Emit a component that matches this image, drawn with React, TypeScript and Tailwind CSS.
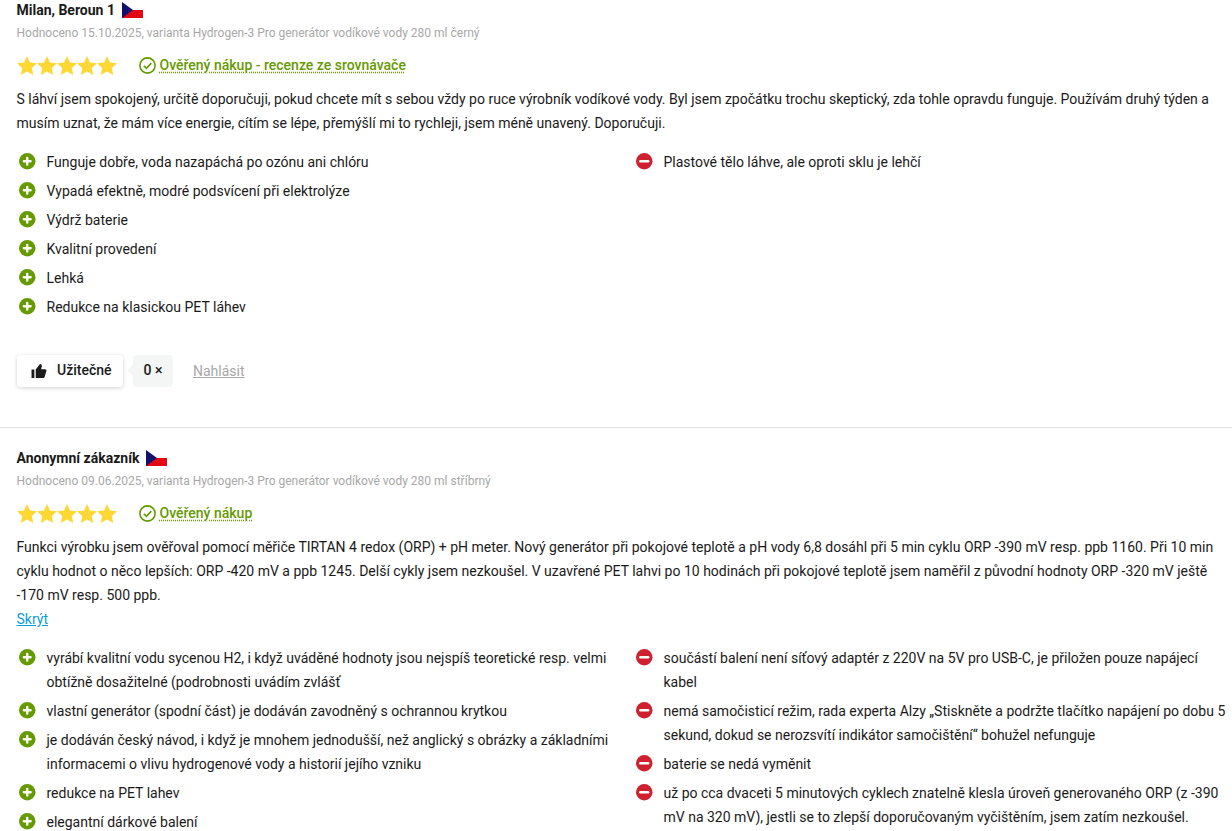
const Flag = () => (
  <svg width="21" height="16" viewBox="0 0 21 16" className="shrink-0">
    <rect width="21" height="8" fill="#fff" />
    <rect y="8" width="21" height="8" fill="#e30613" />
    <path d="M0 0L11 8L0 16Z" fill="#11116b" />
  </svg>
);

const Star = () => (
  <svg width="20" height="19" viewBox="0 0 20 19" className="shrink-0">
    <path d="M10 0l2.9 6.4 7.1.8-5.2 4.7 1.4 7L10 15.4 3.800 18.900l1.400-7L0 7.200l7.100-.8z" fill="#fdd835" />
  </svg>
);

const Plus = () => (
  <svg width="16.500" height="16.500" viewBox="0 0 17 17" className="shrink-0 mt-[3px] ml-[2.500px]">
    <circle cx="8.500" cy="8.500" r="8.500" fill="#659a00" />
    <path d="M8.500 5v7M5 8.500h7" stroke="#fff" strokeWidth="2.400" strokeLinecap="round" />
  </svg>
);

const Minus = () => (
  <svg width="16.500" height="16.500" viewBox="0 0 17 17" className="shrink-0 mt-[3px] ml-[3px]">
    <circle cx="8.500" cy="8.500" r="8.500" fill="#cf2030" />
    <path d="M4.500 8.500h8" stroke="#fff" strokeWidth="2.600" strokeLinecap="round" />
  </svg>
);

const Check = () => (
  <svg width="17" height="17" viewBox="0 0 17 17" fill="none" className="shrink-0">
    <circle cx="8.500" cy="8.500" r="7.600" stroke="#659a00" strokeWidth="1.600" />
    <path d="M4.800 8.700l2.600 2.600 4.900-5.200" stroke="#659a00" strokeWidth="1.600" />
  </svg>
);

const Thumb = () => (
  <svg width="16" height="14" viewBox="0 0 16 15" className="shrink-0">
    <path d="M0 6h3v9H0zM4.500 15V6L9 0c1.500 0 2.200 1 2 2.300L10.300 5.500H14.500c1 0 1.700 1 1.400 2l-1.900 6.300c-.2.700-.9 1.200-1.600 1.200z" fill="#1a1a1a" />
  </svg>
);

function Item({ kind, children }: { kind: "plus" | "minus"; children: React.ReactNode }) {
  return (
    <li className="flex mb-[5px]">
      {kind === "plus" ? <Plus /> : <Minus />}
      <span className="ml-[11px] leading-6">{children}</span>
    </li>
  );
}

function Head({ name, sub, verified }: { name: string; sub: string; verified: string }) {
  return (
    <>
      <div className="flex items-center gap-[7px] h-5">
        <span className="font-bold text-[14px] text-[#1a1a1a]">{name}</span>
        <Flag />
      </div>
      <div className="mt-[3px] text-[12px] leading-[20px] text-[#a8a8a8]">{sub}</div>
      <div className="mt-[12px] flex items-center h-5">
        <div className="flex w-[100px] justify-between">
          <Star /><Star /><Star /><Star /><Star />
        </div>
        <div className="ml-[22px] flex items-center gap-[4px]">
          <Check />
          <span className="font-medium text-[14px] text-[#659a00] underline decoration-dotted underline-offset-2">{verified}</span>
        </div>
      </div>
    </>
  );
}

export default function App() {
  return (
    <div className="h-[831px] w-[1232px] overflow-hidden bg-white text-[14px] text-[#1a1a1a]" style={{ fontFamily: "Roboto, Arial, sans-serif" }}>
      <section className="pl-[16.5px] border-b border-[#e0e0e0] h-[428px]">
        <Head name="Milan, Beroun 1" sub="Hodnoceno 15.10.2025, varianta Hydrogen-3 Pro generátor vodíkové vody 280 ml černý" verified="Ověřený nákup - recenze ze srovnávače" />
        <p className="mt-[12px] leading-6">
          S láhví jsem spokojený, určitě doporučuji, pokud chcete mít s sebou vždy po ruce výrobník vodíkové vody. Byl jsem zpočátku trochu skeptický, zda tohle opravdu funguje. Používám druhý týden a musím uznat, že mám více energie, cítím se lépe, přemýšlí mi to rychleji, jsem méně unavený. Doporučuji.
        </p>
        <div className="mt-[15px] grid grid-cols-[600.5px_599px] gap-x-4">
          <ul>
            <Item kind="plus">Funguje dobře, voda nazapáchá po ozónu ani chlóru</Item>
            <Item kind="plus">Vypadá efektně, modré podsvícení při elektrolýze</Item>
            <Item kind="plus">Výdrž baterie</Item>
            <Item kind="plus">Kvalitní provedení</Item>
            <Item kind="plus">Lehká</Item>
            <Item kind="plus">Redukce na klasickou PET láhev</Item>
          </ul>
          <ul>
            <Item kind="minus">Plastové tělo láhve, ale oproti sklu je lehčí</Item>
          </ul>
        </div>
        <div className="mt-[31px] flex items-center">
          <button className="ml-[0.5px] h-8 w-[106px] pl-[14px] pb-[1px] rounded bg-white shadow-[0_1px_4px_rgba(0,0,0,0.18)] flex items-center gap-[10px] font-medium text-[#1a1a1a]">
            <Thumb />
            Užitečné
          </button>
          <div className="relative ml-[10px] h-8 w-10 pb-[1px] rounded bg-[#f4f5f5] flex items-center justify-center font-medium">
            <span className="absolute left-[-4px] top-[11px] w-2 h-2 rotate-45 bg-[#f4f5f5]" />
            <span className="relative">0 ×</span>
          </div>
          <a className="ml-[20px] text-[#a8a8a8] underline">Nahlásit</a>
        </div>
      </section>
      <section className="pl-[16.5px] pt-[20px]">
        <Head name="Anonymní zákazník" sub="Hodnoceno 09.06.2025, varianta Hydrogen-3 Pro generátor vodíkové vody 280 ml stříbrný" verified="Ověřený nákup" />
        <p className="mt-[12px] leading-6 pr-2">
          Funkci výrobku jsem ověřoval pomocí měřiče TIRTAN 4 redox (ORP) + pH meter. Nový generátor při pokojové teplotě a pH vody 6,8 dosáhl při 5 min cyklu ORP -390 mV resp. ppb 1160. Při 10 min cyklu hodnot o něco lepších: ORP -420 mV a ppb 1245. Delší cykly jsem nezkoušel. V uzavřené PET lahvi po 10 hodinách při pokojové teplotě jsem naměřil z původní hodnoty ORP -320 mV ještě -170 mV resp. 500 ppb.
        </p>
        <a className="block leading-6 text-[#0a9de0] underline">Skrýt</a>
        <div className="mt-[15px] grid grid-cols-[600.5px_599px] gap-x-4">
          <ul>
            <Item kind="plus">vyrábí kvalitní vodu sycenou H2, i když uváděné hodnoty jsou nejspíš teoretické resp. velmi obtížně dosažitelné (podrobnosti uvádím zvlášť</Item>
            <Item kind="plus">vlastní generátor (spodní část) je dodáván zavodněný s ochrannou krytkou</Item>
            <Item kind="plus">je dodáván český návod, i když je mnohem jednodušší, než anglický s obrázky a základními informacemi o vlivu hydrogenové vody a historií jejího vzniku</Item>
            <Item kind="plus">redukce na PET lahev</Item>
            <Item kind="plus">elegantní dárkové balení</Item>
          </ul>
          <ul>
            <Item kind="minus">součástí balení není síťový adaptér z 220V na 5V pro USB-C, je přiložen pouze napájecí kabel</Item>
            <Item kind="minus">nemá samočisticí režim, rada experta Alzy „Stiskněte a podržte tlačítko napájení po dobu 5 sekund, dokud se nerozsvítí indikátor samočištění“ bohužel nefunguje</Item>
            <Item kind="minus">baterie se nedá vyměnit</Item>
            <Item kind="minus">už po cca dvaceti 5 minutových cyklech znatelně klesla úroveň generovaného ORP (z -390 mV na 320 mV), jestli se to zlepší doporučovaným vyčištěním, jsem zatím nezkoušel.</Item>
          </ul>
        </div>
      </section>
    </div>
  );
}
